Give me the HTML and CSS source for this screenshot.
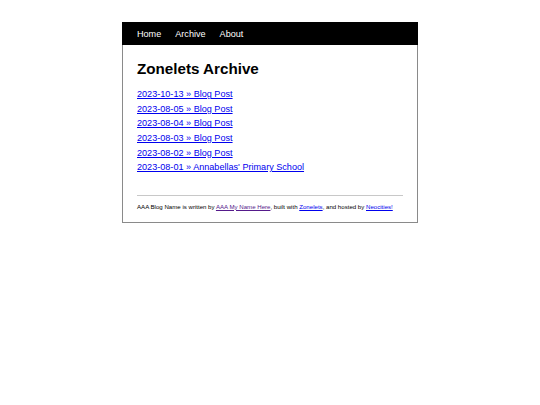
FILE: index.html
```html
<!DOCTYPE html>
<html>
<head>
<meta charset="utf-8">
<link rel="stylesheet" href="styles.css">
</head>
<body>
<div class="page">
  <nav class="nav">
    <a href="#">Home</a>
    <a href="#">Archive</a>
    <a href="#">About</a>
  </nav>
  <main class="content">
    <h1 class="title">Zonelets Archive</h1>
    <ul class="posts">
      <li><a href="#">2023-10-13 » Blog Post</a></li>
      <li><a href="#">2023-08-05 » Blog Post</a></li>
      <li><a href="#">2023-08-04 » Blog Post</a></li>
      <li><a href="#">2023-08-03 » Blog Post</a></li>
      <li><a href="#">2023-08-02 » Blog Post</a></li>
      <li><a href="#">2023-08-01 » Annabellas' Primary School</a></li>
    </ul>
    <footer class="footer">
      AAA Blog Name is written by <a class="visited" href="#">AAA My Name Here</a>, built with <a href="#">Zonelets</a>, and hosted by <a href="#">Neocities!</a>
    </footer>
  </main>
</div>
</body>
</html>
```

FILE: styles.css
```css
html, body {
  margin: 0;
  padding: 0;
  background: #fff;
}
body {
  font-family: "Liberation Sans", Arial, sans-serif;
  color: #000;
}
.page {
  width: 294px;
  margin: 22px auto 0;
  border: 1px solid #8a8a8a;
  border-top: none;
}
.nav {
  background: #000;
  height: 23px;
  display: flex;
  align-items: center;
  gap: 14px;
  padding: 0 15px;
  margin: 0 -1px;
  font-size: 9.1px;
}
.nav a {
  color: #fff;
  text-decoration: none;
}
.content {
  padding: 15px 14px 12px;
}
.title {
  font-size: 15.2px;
  font-weight: bold;
  margin: 0 0 10px;
  line-height: 17.2px;
}
.posts {
  list-style: none;
  margin: 0;
  padding: 0;
  font-size: 9.1px;
  line-height: 14.6px;
}
.posts a {
  color: #0000ee;
}
.footer {
  margin-top: 20px;
  border-top: 1px solid #c8c8c8;
  padding-top: 7px;
  font-size: 6.1px;
  line-height: 7px;
}
.footer a {
  color: #0000ee;
}
.footer a.visited {
  color: #551a8b;
}
```
